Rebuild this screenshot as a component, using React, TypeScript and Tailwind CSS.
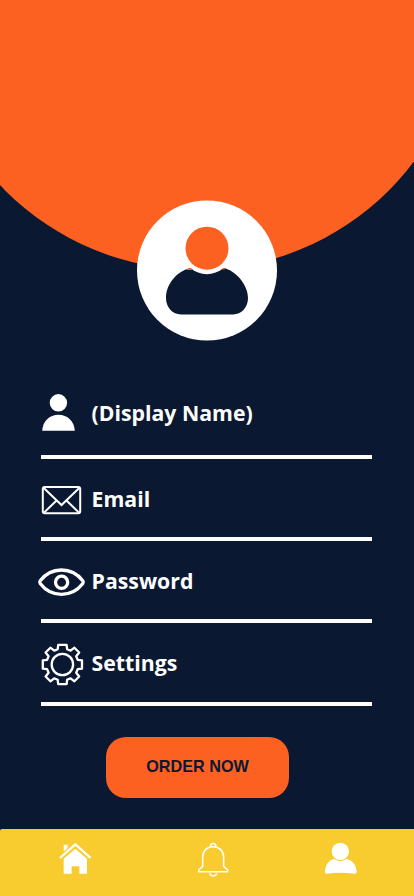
import type { ReactNode } from "react";

const PersonIcon = () => (
  <svg width="50" height="78" viewBox="0 0 50 78" fill="#fff">
    <circle cx="22.4" cy="25.8" r="8.7" />
    <path d="M6.2 53.8C6.6 44.5 13.5 37.8 22.5 37.8S38.3 44.5 38.8 53.8Z" />
  </svg>
);

const MailIcon = () => (
  <svg width="50" height="78" viewBox="0 0 50 78" fill="none" stroke="#fff" strokeWidth="2">
    <rect x="6.8" y="28" width="37.4" height="26.3" rx="2" />
    <path d="M7.5 28.8 25.5 46 43.5 28.8M8 53.6 20.3 41.8M43 53.6 30.7 41.8" />
  </svg>
);

const EyeIcon = () => (
  <svg width="50" height="78" viewBox="0 0 50 78" fill="none" stroke="#fff" strokeWidth="3.3">
    <path d="M4.2 39.8C9.6 32.7 17 29 25.5 29S41.4 32.7 46.8 39.8Q47.8 41.2 46.8 42.6C41.4 49.7 34 53.4 25.5 53.4S9.6 49.7 4.2 42.6Q3.2 41.2 4.2 39.8Z" />
    <circle cx="25.6" cy="41.3" r="6.1" />
  </svg>
);

const GearIcon = () => (
  <svg width="50" height="78" viewBox="0 0 50 78" fill="none" stroke="#fff" strokeWidth="2.3" strokeLinejoin="round">
    <g transform="translate(26.4 41.5)">
      <circle r="10.7" />
      <path d="M-4.7-15.3-4.2-19.6H4.2L4.7-15.3 8.2-13.8 12-16.8 16.8-12 13.8-8.2 15.3-4.7 19.6-4.2V4.2L15.3 4.7 13.8 8.2 16.8 12 12 16.8 8.2 13.8 4.7 15.3 4.2 19.6H-4.2L-4.7 15.3-8.2 13.8-12 16.8-16.8 12-13.8 8.2-15.3 4.7-19.6 4.2V-4.2L-15.3-4.7-13.8-8.2-16.8-12-12-16.8-8.2-13.8Z" />
    </g>
  </svg>
);

const HomeIcon = () => (
  <svg width="138" height="67" viewBox="0 27 414 201" fill="#fff">
    <path d="M191 74H203V84L191 95Z" />
    <path d="M226 86 261 116V161H238V139H215V161H191V116Z" />
    <path d="M180 114 226 73 272 114" fill="none" stroke="#fff" strokeWidth="7" />
  </svg>
);

const BellIcon = () => (
  <svg width="138" height="67" viewBox="0 27 414 201" fill="none" stroke="#fff" strokeWidth="4.5" strokeLinejoin="round">
    <path d="M182 155V150L194 139V112C194 93 206 80 225 80S257 93 257 112V139L269 150V155Z" />
    <path d="M217 80C217 67 234 67 234 80M215 160C217 170 234 170 236 160" />
  </svg>
);

const AccountIcon = () => (
  <svg width="138" height="67" viewBox="0 27 414 201" fill="#fff">
    <circle cx="193" cy="94" r="26" />
    <path d="M175 117Q193 130 211 117C229 120 242 136 242 156Q242 162 236 161Q193 155 153 161Q147 162 147 156C147 136 158 120 175 117Z" />
  </svg>
);

function Avatar() {
  return (
    <svg className="relative" width="140" height="141" viewBox="137 200 140 141">
      <circle cx="207" cy="270.5" r="70" fill="#fff" />
      <circle cx="207" cy="248.2" r="21.5" fill="#fd6122" />
      <path
        d="M190.5 268C177 271 166 284 166 298C166 307.5 172.5 314.4 181 314.4H233C241.5 314.4 248 307.5 248 298C248 285 236 270.5 223.5 268C214 276.2 199.5 276.2 190.5 268Z"
        fill="#0a1931"
      />
      <path d="M185 269.9Q188 268.4 190.5 268L192.8 269.9ZM221.6 269.7 223.5 268 226.2 269Z" fill="#fd6122" />
    </svg>
  );
}

function Row({ icon, label, shift, height = "h-[78px]" }: { icon: ReactNode; label: string; shift: string; height?: string }) {
  return (
    <div className="flex flex-col">
      <div className={`-ml-[5px] flex items-start gap-[5.6px] ${height}`}>
        {icon}
        <span className={`text-[21.25px] leading-[30px] font-bold whitespace-nowrap text-white ${shift}`}>{label}</span>
      </div>
      <div className="h-1 bg-white" />
    </div>
  );
}

export default function App() {
  return (
    <div className="flex h-[896px] w-[414px] flex-col overflow-hidden bg-[#0a1931] font-['Open_Sans',sans-serif]">
      <header className="relative flex h-[377px] shrink-0 justify-center overflow-hidden pt-[200px]">
        <div className="absolute -top-[272px] -left-[74px] size-[542px] rounded-full bg-[#fd6122]" />
        <Avatar />
      </header>

      <main className="flex flex-1 flex-col">
        <div className="mr-[42px] ml-[41px]">
          <Row icon={<PersonIcon />} label="(Display Name)" shift="mt-[21px]" />
          <Row icon={<MailIcon />} label="Email" shift="mt-[25px]" />
          <Row icon={<EyeIcon />} label="Password" shift="mt-[25px]" />
          <Row icon={<GearIcon />} label="Settings" shift="mt-[25px]" height="h-[79px]" />
        </div>
        <button className="mt-[31px] ml-[106px] h-[61px] w-[183px] rounded-[20px] bg-[#fd6122] pb-[3px] font-['Liberation_Sans',sans-serif] text-[16.2px] font-bold text-[#0a1931]">
          ORDER NOW
        </button>
      </main>

      <nav className="flex h-[67px] shrink-0 rounded-tl-[2px] bg-[#f8cb2e]">
        <HomeIcon />
        <BellIcon />
        <AccountIcon />
      </nav>
    </div>
  );
}
